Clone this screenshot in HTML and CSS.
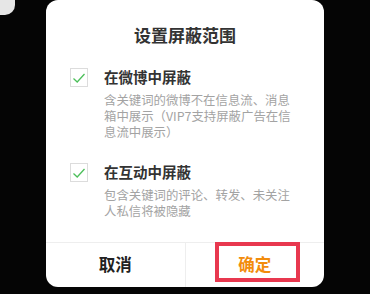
FILE: index.html
```html
<!DOCTYPE html>
<html>
<head>
<meta charset="utf-8">
<link rel="stylesheet" href="styles.css">
</head>
<body>
<div class="page">
  <div class="corner"></div>
  <div class="dialog">
    <div class="title">设置屏蔽范围</div>
    <div class="item item-first">
      <div class="check"><svg width="14" height="12" viewBox="0 0 14 12"><path d="M1.5 6.5 L5.2 10 L12.5 2" fill="none" stroke="#4cbf5a" stroke-width="1.3"/></svg></div>
      <div class="content">
        <div class="label">在微博中屏蔽</div>
        <div class="desc">含关键词的微博不在信息流、消息箱中展示（VIP7支持屏蔽广告在信息流中展示）</div>
      </div>
    </div>
    <div class="item item-second">
      <div class="check"><svg width="14" height="12" viewBox="0 0 14 12"><path d="M1.5 6.5 L5.2 10 L12.5 2" fill="none" stroke="#4cbf5a" stroke-width="1.3"/></svg></div>
      <div class="content">
        <div class="label">在互动中屏蔽</div>
        <div class="desc">包含关键词的评论、转发、未关注人私信将被隐藏</div>
      </div>
    </div>
    <div class="buttons">
      <div class="btn cancel">取消</div>
      <div class="btn confirm">确定<span class="highlight"></span></div>
    </div>
  </div>
</div>
</body>
</html>
```

FILE: styles.css
```css
* { box-sizing: border-box; }
html, body {
  margin: 0;
  padding: 0;
  background: #050505;
  width: 370px;
  height: 294px;
  overflow: hidden;
  font-family: "Noto Sans CJK SC", "Noto Sans", sans-serif;
}
.page {
  display: flex;
  align-items: flex-start;
}
.corner {
  width: 15px;
  height: 15px;
  background: #e6e6e6;
  border-bottom-right-radius: 10px;
  flex: none;
}
.dialog {
  margin-left: 31px;
  width: 278px;
  height: 287px;
  background: #fff;
  border-radius: 12px;
  display: flex;
  flex-direction: column;
  padding-top: 23px;
}
.title {
  text-align: center;
  font-size: 17px;
  line-height: 24px;
  font-weight: 700;
  color: #333;
}
.item {
  display: flex;
  padding-left: 24px;
}
.item-first { margin-top: 20px; }
.item-second { margin-top: 22px; }
.check {
  width: 18px;
  height: 19px;
  border: 1px solid #dcdcdc;
  margin-top: 1px;
  display: flex;
  align-items: center;
  justify-content: center;
  flex: none;
}
.content {
  margin-left: 16px;
  width: 190px;
}
.label {
  font-size: 14.5px;
  line-height: 20px;
  font-weight: 700;
  color: #333;
}
.desc {
  margin-top: 5px;
  font-size: 12.4px;
  line-height: 16px;
  color: #a3a3a3;
}
.buttons {
  margin-top: auto;
  height: 45px;
  border-top: 1px solid #eeeeee;
  display: flex;
}
.btn {
  flex: 1;
  display: flex;
  align-items: center;
  justify-content: center;
  font-size: 16.5px;
  font-weight: 700;
  padding-bottom: 2px;
}
.cancel {
  color: #222;
  border-right: 1px solid #eeeeee;
}
.confirm {
  color: #f28c0c;
  position: relative;
}
.highlight {
  position: absolute;
  left: 29px;
  top: -1px;
  width: 85px;
  height: 40px;
  border: 4px solid #e8384f;
}
```
